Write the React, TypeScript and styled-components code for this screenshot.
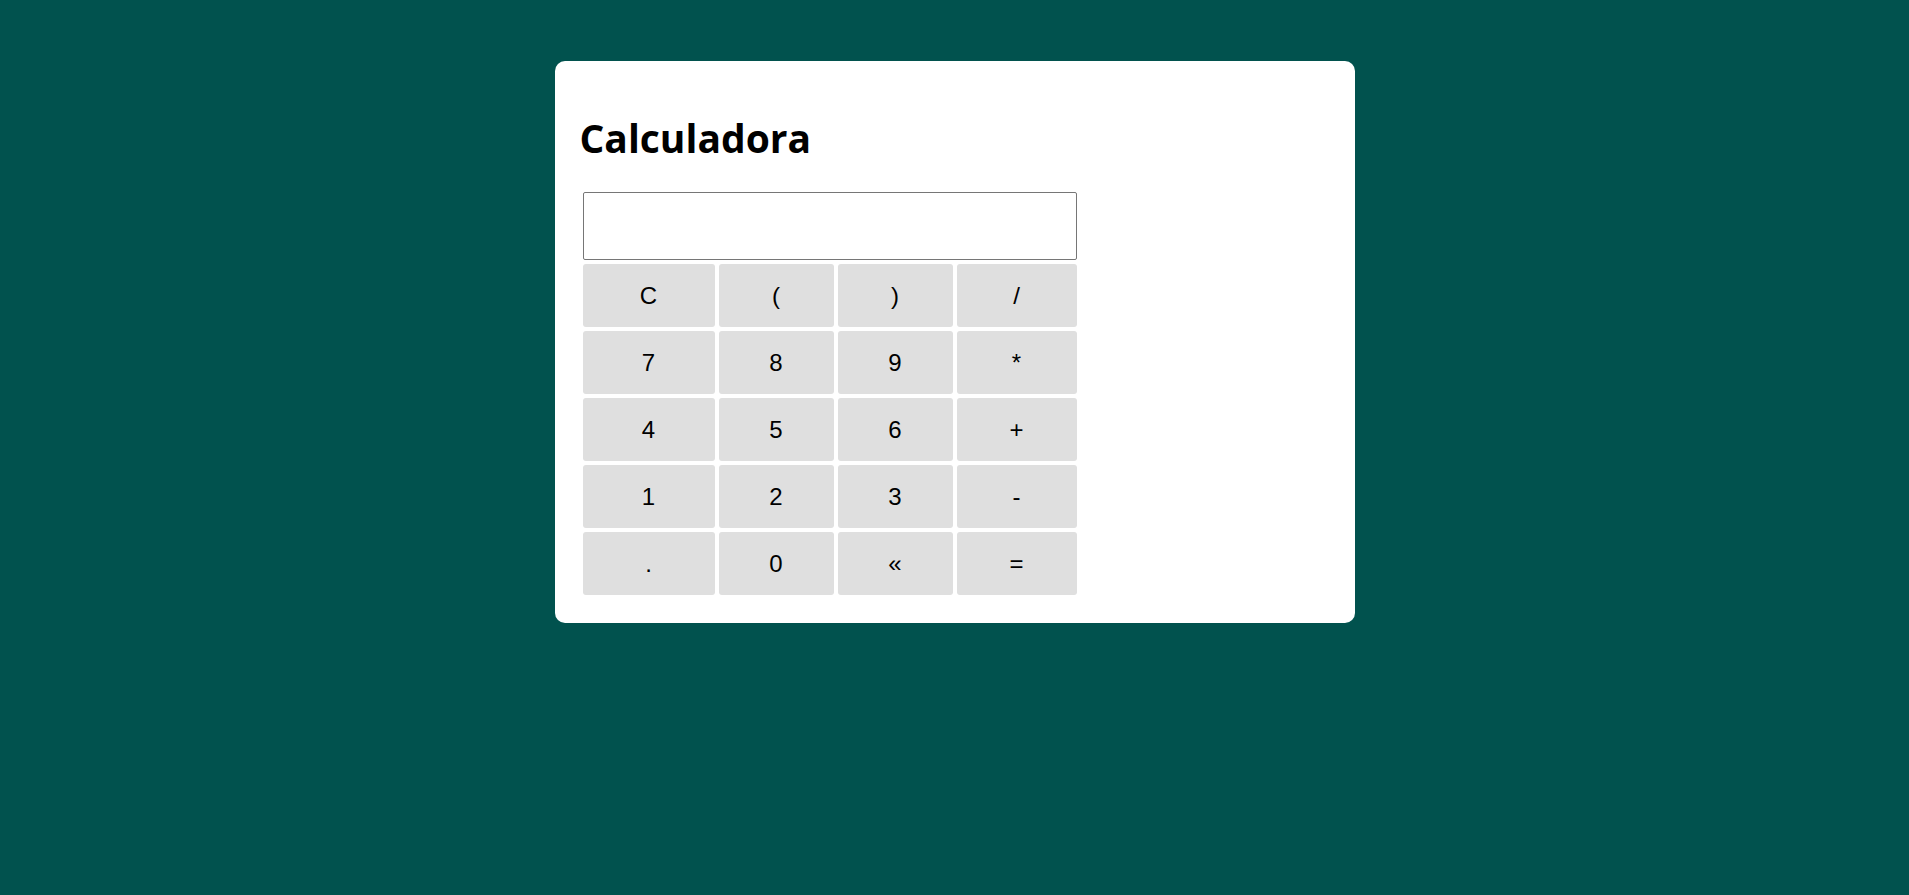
import React, { FC, useState } from 'react';
import styled, { createGlobalStyle } from 'styled-components';

const GlobalStyle = createGlobalStyle`
  html, body {
    margin: 0;
    padding: 0;
    min-height: 100%;
    background: #01524e;
  }
  body {
    font-family: 'Open Sans', 'Liberation Sans', sans-serif;
  }
`;

const Page = styled.div`
  min-height: 100vh;
  padding-top: 61px;
  box-sizing: border-box;
`;

const Card = styled.div`
  width: 800px;
  margin: 0 auto;
  background: #ffffff;
  border-radius: 10px;
  padding: 50px 0 28px 25px;
  box-sizing: border-box;
`;

const Title = styled.h1`
  margin: 0 0 28px;
  font-family: 'Open Sans', sans-serif;
  font-weight: 700;
  font-size: 39px;
  line-height: normal;
  color: #000;
`;

const Keypad = styled.div`
  display: grid;
  grid-template-columns: 132px 115px 115px 120px;
  grid-template-rows: 68px;
  grid-auto-rows: 63px;
  gap: 4px;
  margin-left: 3px;
  width: max-content;
`;

const Display = styled.input`
  grid-column: 1 / -1;
  height: 68px;
  box-sizing: border-box;
  border: 1px solid #767676;
  border-radius: 2px;
  padding: 0 8px;
  font-family: 'Liberation Sans', Arial, sans-serif;
  font-size: 24px;
  outline: none;
`;

const Key = styled.button`
  border: none;
  border-radius: 3px;
  background: #dfdfdf;
  color: #000;
  font-family: 'Liberation Sans', Arial, sans-serif;
  font-size: 24px;
  padding: 0;
  cursor: pointer;
  &:hover {
    background: #d4d4d4;
  }
`;

const KEYS = ['C', '(', ')', '/', '7', '8', '9', '*', '4', '5', '6', '+', '1', '2', '3', '-', '.', '0', '«', '='];

export const Calculator: FC = () => {
  const [value, setValue] = useState('');

  const press = (k: string) => {
    if (k === 'C') return setValue('');
    if (k === '«') return setValue((v) => v.slice(0, -1));
    if (k === '=') {
      try {
        // eslint-disable-next-line no-new-func
        const res = Function(`"use strict"; return (${value})`)();
        setValue(String(res));
      } catch {
        setValue('Erro');
      }
      return;
    }
    setValue((v) => v + k);
  };

  return (
    <Card>
      <Title>Calculadora</Title>
      <Keypad>
        <Display value={value} onChange={(e) => setValue(e.target.value)} />
        {KEYS.map((k) => (
          <Key key={k} onClick={() => press(k)}>
            {k}
          </Key>
        ))}
      </Keypad>
    </Card>
  );
};

export default function App() {
  return (
    <Page>
      <GlobalStyle />
      <Calculator />
    </Page>
  );
}
